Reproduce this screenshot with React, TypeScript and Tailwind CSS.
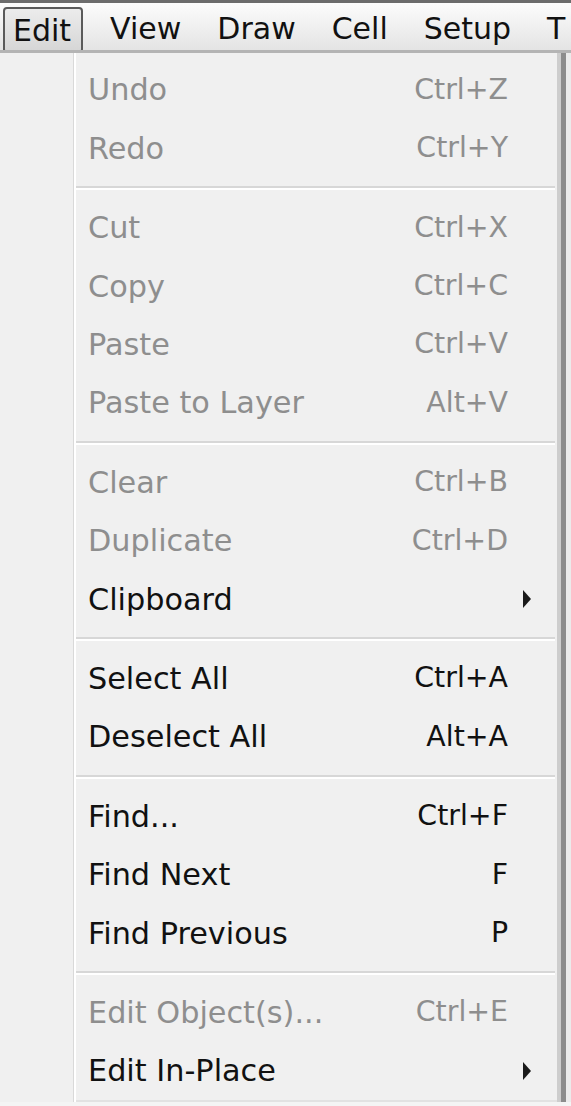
const font = { fontFamily: '"DejaVu Sans", Verdana, sans-serif' }

type Item = { label: string; key?: string; off?: boolean; sub?: boolean }

const groups: Item[][] = [
  [
    { label: 'Undo', key: 'Ctrl+Z', off: true },
    { label: 'Redo', key: 'Ctrl+Y', off: true },
  ],
  [
    { label: 'Cut', key: 'Ctrl+X', off: true },
    { label: 'Copy', key: 'Ctrl+C', off: true },
    { label: 'Paste', key: 'Ctrl+V', off: true },
    { label: 'Paste to Layer', key: 'Alt+V', off: true },
  ],
  [
    { label: 'Clear', key: 'Ctrl+B', off: true },
    { label: 'Duplicate', key: 'Ctrl+D', off: true },
    { label: 'Clipboard', sub: true },
  ],
  [
    { label: 'Select All', key: 'Ctrl+A' },
    { label: 'Deselect All', key: 'Alt+A' },
  ],
  [
    { label: 'Find...', key: 'Ctrl+F' },
    { label: 'Find Next', key: 'F' },
    { label: 'Find Previous', key: 'P' },
  ],
  [
    { label: 'Edit Object(s)...', key: 'Ctrl+E', off: true },
    { label: 'Edit In-Place', sub: true },
  ],
]

function Row({ item }: { item: Item }) {
  const color = item.off ? 'text-[#8e8e8e]' : 'text-[#111]'
  return (
    <div className={`flex h-[58.4px] items-center pl-[12px] ${color}`}>
      <span className="flex-1 text-[30.3px]">{item.label}</span>
      <span className="text-[28.4px]">{item.key}</span>
      <div className="flex w-[49px] items-center pl-[14px]">
        {item.sub && (
          <svg width="10" height="18" viewBox="0 0 10 18">
            <path d="M1 0 L9 9 L1 18 Z" fill="#1a1a1a" />
          </svg>
        )}
      </div>
    </div>
  )
}

function Separator() {
  return (
    <div className="flex h-[21px] items-center pr-[2px]">
      <div className="h-[4px] w-full border-t-2 border-b-2 border-t-[#d7d7d7] border-b-white" />
    </div>
  )
}

export default function App() {
  return (
    <div className="h-[1106px] w-[571px] overflow-hidden bg-[#f4f4f4]" style={font}>
      {/* menu bar */}
      <div className="flex h-[53px] items-end overflow-hidden border-t-[3px] border-b-[3px] border-t-[#6c6c6c] border-b-[#b4b4b4] bg-gradient-to-b from-[#fcfcfc] to-[#e4e4e4] text-[30px] text-[#111]">
        <div className="mb-[-3px] ml-[3px] flex h-[46px] shrink-0 items-center rounded-[4px] border-2 border-[#5a5a5a] bg-gradient-to-b from-[#ececec] to-[#d6d6d6] pl-[8px] pr-[10px]">
          Edit
        </div>
        <div className="flex h-[44px] shrink-0 items-center gap-[36px] pl-[27px]">
          <span>View</span>
          <span>Draw</span>
          <span>Cell</span>
          <span>Setup</span>
          <span>T</span>
        </div>
      </div>

      {/* dropdown */}
      <div className="flex">
        <div className="flex w-[566px] bg-[#f0f0f0]">
          <div className="w-[73px]" />
          <div className="w-[1px] bg-[#d9d9d9]" />
          <div className="w-[2px] bg-white" />
          <div className="flex-1 pt-[8px]">
            {groups.map((g, gi) => (
              <div key={gi}>
                {gi > 0 && <Separator />}
                {g.map((it) => (
                  <Row key={it.label} item={it} />
                ))}
              </div>
            ))}
            <div className="h-[2px] bg-[#e2e2e2]" />
          </div>
          <div className="w-[4px] bg-[#cdcdcd]" />
          <div className="w-[5px] bg-[#8c8c8c]" />
        </div>
        <div className="flex-1 bg-[#ebebeb]" />
      </div>
    </div>
  )
}
